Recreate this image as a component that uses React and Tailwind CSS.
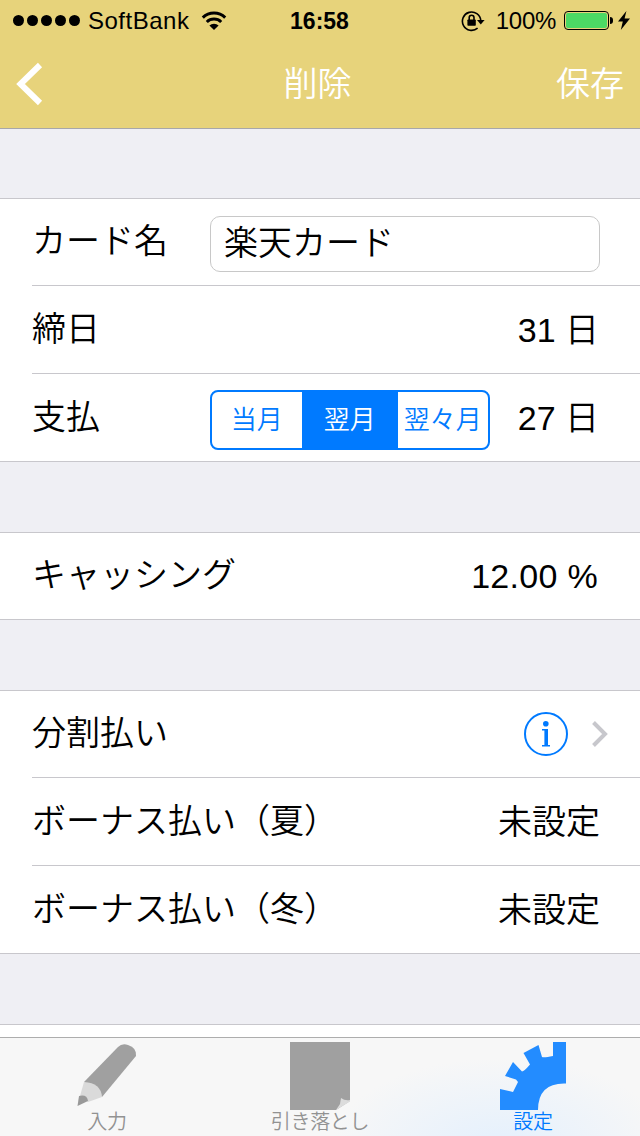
const tabs = [
  { label: "入力", icon: PencilIcon, active: false },
  { label: "引き落とし", icon: PaperIcon, active: false },
  { label: "設定", icon: GearIcon, active: true },
]

const months = ["当月", "翌月", "翌々月"]

function StatusBar() {
  return (
    <div className="grid h-10 grid-cols-3 items-center text-[24px] leading-10 text-black">
      <div className="flex items-center pl-[13px]">
        <div className="flex gap-[3px]">
          {[0, 1, 2, 3, 4].map((dot) => (
            <span key={dot} className="size-[11px] rounded-full bg-black" />
          ))}
        </div>
        <span className="ml-2 pt-px tracking-[0.5px]">SoftBank</span>
        <svg className="ml-3 shrink-0" width="26" height="20" viewBox="0 0 26 20" fill="none" stroke="black" strokeWidth="3">
          <path d="M1.8 6.6a16 16 0 0 1 22.4 0" />
          <path d="M5.8 11a10.4 10.4 0 0 1 14.4 0" />
          <path d="M8.4 14.6a6.4 6.4 0 0 1 9.2 0L13 19z" fill="black" stroke="none" />
        </svg>
      </div>
      <div className="pt-px pr-px text-center text-[23px] font-bold">16:58</div>
      <div className="flex items-center justify-end pr-[10px]">
        <svg width="24" height="22" viewBox="0 0 24 22" fill="none" stroke="black" strokeWidth="1.6">
          <path d="M16.6 18.2A9.2 9.2 0 1 1 19.8 10.5" />
          <path d="M16 10h7.6l-3.8 4.4z" fill="black" stroke="none" />
          <rect x="6.4" y="9.4" width="8.4" height="6.4" rx="0.8" fill="black" stroke="none" />
          <path d="M8.2 10V7.6a2.4 2.4 0 0 1 4.8 0V10" />
        </svg>
        <span className="ml-[11px] pt-px tracking-[-0.3px]">100%</span>
        <div className="ml-2 flex h-[19px] w-[45px] rounded-[4px] border border-black p-px">
          <div className="flex-1 rounded-[2px] bg-[#4cd964]" />
        </div>
        <span className="ml-px h-[7px] w-[3px] rounded-r-full bg-black" />
        <svg className="ml-[5px]" width="12" height="19" viewBox="0 0 12 19">
          <path d="M8.4 0 0 10.6h4.8L2.8 19 12 7.6H6.6z" />
        </svg>
      </div>
    </div>
  )
}

function NavBar() {
  return (
    <header className="h-[129px] shrink-0 border-b border-[#a7a7aa] bg-[#e7d37b]">
      <StatusBar />
      <div className="grid h-[88px] grid-cols-3 items-center px-4 text-[34px] font-[350] text-white font-['Noto_Sans_CJK_JP',sans-serif]">
        <button type="button">
          <svg width="27" height="44" viewBox="0 0 27 44" fill="none" stroke="white" strokeWidth="6">
            <path d="M24 3 4.5 22 24 41" />
          </svg>
        </button>
        <button type="button" className="pr-[5px] pb-[5px]">削除</button>
        <button type="button" className="pb-[5px] text-right">保存</button>
      </div>
    </header>
  )
}

function Group({ children, className = "mt-[70px]" }) {
  return (
    <section className={`shrink-0 border-y border-[#c8c7cc] bg-white pl-8 ${className}`}>
      {children}
    </section>
  )
}

function Row({ label, last, height = "h-[88px]", children }) {
  return (
    <div className={`flex items-center pr-10 ${height} ${last ? "" : "border-b border-[#c8c7cc]"}`}>
      <span className="pb-[6px] font-['Noto_Sans_CJK_JP',sans-serif]">{label}</span>
      {children}
    </div>
  )
}

function MonthPicker() {
  return (
    <div className="mt-1 flex h-[60px] w-[280px] overflow-hidden rounded-[8px] border-2 border-[#007aff] text-[26px] font-[350] font-['Noto_Sans_CJK_JP',sans-serif]">
      {months.map((month) => (
        <button
          key={month}
          type="button"
          className={`flex items-center justify-center whitespace-nowrap pb-[3px] ${
            month === "翌月" ? "w-24 bg-[#007aff] text-white" : "w-[90px] text-[#007aff]"
          }`}
        >
          {month}
        </button>
      ))}
    </div>
  )
}

function PencilIcon() {
  return (
    <svg width="66" height="68" viewBox="0 0 66 68">
      <path d="M10 40 44 5Q48 1 54 3Q63 6 62 14L28 55z" fill="#a0a0a0" />
      <path d="M10 40q17 1 18 15L14 60l-8-6z" fill="#dadada" />
      <path d="M5 54q8-2 9 5L3.5 64z" fill="#999" />
    </svg>
  )
}

function PaperIcon() {
  return (
    <svg width="66" height="68" viewBox="0 0 66 68">
      <path d="M3 0h60v59L49 68H3z" fill="#a0a0a0" />
      <path d="M54 56q4 3 9 2v1.5L49 68l4-6z" fill="#dcdcdc" />
    </svg>
  )
}

function GearIcon() {
  return (
    <svg width="66" height="68" viewBox="0 0 66 68" fill="#238cff">
      <path d="M53 0h13v41.5q-28-1-28 26.5H0V47l13 3 5-10-2-2.5L5 34l8-14 9 9.5q2 0 8-7L23.5 11l15-8L42 15q2 1 11-1z" />
    </svg>
  )
}

export default function App() {
  return (
    <div className="flex h-[1136px] w-[640px] flex-col overflow-hidden bg-[#efeff4] text-[34px] leading-none font-[350] text-black font-['Liberation_Sans','Noto_Sans_CJK_JP',sans-serif]">
      <NavBar />

      <main className="flex min-h-0 flex-1 flex-col overflow-hidden">
        <Group className="mt-[69px]">
          <Row label="カード名" height="h-[87px]">
            <input
              className="mt-1 ml-auto h-14 w-[390px] rounded-[10px] border border-[#c8c8c8] px-[13px] pb-[7px] outline-none font-['Noto_Sans_CJK_JP',sans-serif]"
              defaultValue="楽天カード"
            />
          </Row>
          <Row label="締日">
            <span className="ml-auto pr-px">31 日</span>
          </Row>
          <Row label="支払" last height="h-[87px]">
            <div className="ml-auto flex items-center gap-7 pr-px">
              <MonthPicker />
              <span className="pt-px">27 日</span>
            </div>
          </Row>
        </Group>

        <Group>
          <Row label="キャッシング" last height="h-[86px]">
            <span className="ml-auto pr-[2px] tracking-[0.3px]">12.00 %</span>
          </Row>
        </Group>

        <Group>
          <Row label="分割払い" height="h-[87px]">
            <div className="-mr-2 ml-auto flex items-center gap-6">
              <svg width="44" height="44" viewBox="0 0 44 44" fill="#007aff">
                <circle cx="22" cy="22" r="21" fill="none" stroke="#007aff" strokeWidth="2" />
                <circle cx="21.8" cy="11.8" r="2.8" />
                <path d="M18 17h6v16h2v1.6h-8V33h2.4V18.6H18z" />
              </svg>
              <svg width="16" height="26" viewBox="0 0 16 26" fill="none" stroke="#c7c7cc" strokeWidth="4">
                <path d="M1.5 1.5 13 13 1.5 24.5" />
              </svg>
            </div>
          </Row>
          <Row label="ボーナス払い（夏）">
            <span className="ml-auto">未設定</span>
          </Row>
          <Row label="ボーナス払い（冬）" last height="h-[87px]">
            <span className="ml-auto pt-px">未設定</span>
          </Row>
        </Group>

        <Group className="mt-[70px] h-20" />
      </main>

      <nav className="flex h-[99px] shrink-0 justify-center gap-[147px] border-t border-[#adadad] bg-[#f7f7f7] bg-[radial-gradient(ellipse_170px_90px_at_500px_110px,#e4f0fd,#f7f7f7)] pt-1">
        {tabs.map(({ label, icon: Icon, active }) => (
          <button
            key={label}
            type="button"
            className={`flex w-[66px] flex-col items-center whitespace-nowrap text-[20px] leading-5 tracking-[-0.3px] font-[350] font-['Noto_Sans_CJK_JP',sans-serif] ${
              active ? "text-[#007aff]" : "text-[#929292]"
            }`}
          >
            <Icon />
            <span className="pt-px">{label}</span>
          </button>
        ))}
      </nav>
    </div>
  )
}
